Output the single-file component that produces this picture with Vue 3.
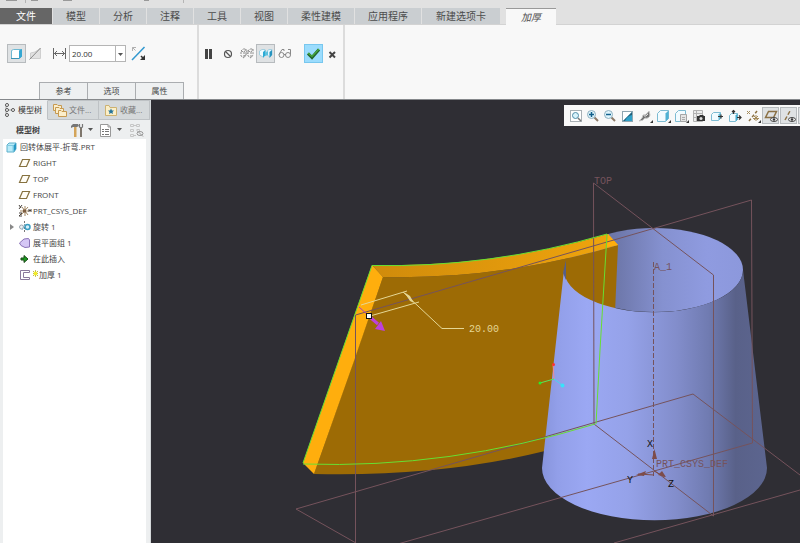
<script setup>
import { ref } from 'vue'

const thickness = ref('20.00')
const menuTabs = ['模型', '分析', '注释', '工具', '视图']
const wideTabs = ['柔性建模', '应用程序', '新建选项卡']
const panels = ['参考', '选项', '属性']

const planeArt = '<path d="M6.500 4.500H13.500L10.500 11.500H3.500Z" fill="#fffdf6" stroke="#86713f" stroke-width="1.200"/>'
const cubeArt = '<path d="M4 6L6 4H13V10L11 13H4Z" fill="#b9ebf9" stroke="#5fb0cb"/><path d="M10.500 6.500L13 4V10L10.500 13Z" fill="#2798c4"/><path d="M4.500 6.500H10V12.500" fill="none" stroke="#7fcbe2"/>'

const tree = [
  { label: '回转体展平-折弯.PRT', art: cubeArt, root: true },
  { label: 'RIGHT', art: planeArt },
  { label: 'TOP', art: planeArt },
  { label: 'FRONT', art: planeArt },
  { label: 'PRT_CSYS_DEF', art: '<path d="M9 3V13M4 8H13M5 12L12 4M6 4L12 12" stroke="#a08560" /><path d="M3 2L5 5M6 2L3 6M3 10H6L3 13H6M13 6V9M15 6V9M13 7.500H15" fill="none" stroke="#4b4540"/><rect x="7" y="6.500" width="3" height="3" fill="#7c5d40"/>' },
  { label: '旋转 1', expandable: true, art: '<circle cx="5.500" cy="8" r="2" fill="#edf1f4" stroke="#9fa9b1"/><path d="M8.500 2V14" stroke="#777" stroke-dasharray="2 1"/><circle cx="11.500" cy="8" r="2.500" fill="#d5f0fa" stroke="#3a9dc2" stroke-width="1.500"/><path d="M6 11L9 5" stroke="#90b7c8"/>' },
  { label: '展平面组 1', art: '<path d="M3.500 8L8 4L12.500 3.500L13.500 5V12L9 12.500L5 10.500Z" fill="#d5c7f5" stroke="#8a72b8"/>' },
  { label: '在此插入', art: '<path d="M5 7H8V4.500L12 8L8 11.500V9H5Z" fill="#189a1e" stroke="#1d4a1a"/>' },
  { label: '加厚 1', fresh: true, art: '<path d="M13.500 4V3.500H4.500V12.500H13.500V10.500H7.500V5.500H13.500Z" fill="#fff" stroke="#8a7a9c"/>' }
]

const lens = '<path d="M9 9L13 13" stroke="#8d7a68" stroke-width="2"/><circle cx="6.500" cy="6.500" r="4" fill="#dff4fc" stroke="#8fb0bf"/>'
const eye = '<ellipse cx="11" cy="11.500" rx="3.500" ry="2" fill="#f3f3f3" stroke="#444"/><circle cx="11" cy="11.500" r="1.200" fill="#333"/>'
const more = '<path d="M16 12V15H13Z" fill="#333"/>'
const viewTools = [
  { name: '重新调整', slim: true, art: '<rect x="2.500" y="2.500" width="11" height="11" fill="#fff" stroke="#a9b0b5"/><circle cx="7.500" cy="7.500" r="3" fill="#d8f2fb" stroke="#4f8da8"/><path d="M10 10L13 13" stroke="#777" stroke-width="1.500"/>' },
  { name: '放大', slim: true, art: lens + '<path d="M4 6.500H9M6.500 4V9" stroke="#12608c" stroke-width="1.500"/>' },
  { name: '缩小', slim: true, art: lens + '<path d="M4 6.500H9" stroke="#12608c" stroke-width="1.500"/>' },
  { name: '重画', art: '<rect x="3.500" y="3.500" width="10" height="10" fill="#fff" stroke="#8fa5b0"/><path d="M13 4V13H4Z" fill="#2fa0c8"/><path d="M4 13L13 4V7Q8 8 6 13Z" fill="#245f78"/>' },
  { name: '渲染', art: '<path d="M2 13Q6 10 6 7Q9 8 12 3L13 7Q12 11 8 10Q6 13 2 13Z" fill="#6f6f6f" stroke="#c4c4c4"/><path d="M7 8Q9 9 11 6" fill="none" stroke="#ddd"/>' + more },
  { name: '显示样式', art: '<path d="M2.500 5.500L5.500 2.500H13.500V10.500L10.500 13.500H2.500Z" fill="#f2fbff" stroke="#7dbbd2"/><path d="M10.500 5.500L13.500 2.500V10.500L10.500 13.500Z" fill="#4eb1d3"/>' + more },
  { name: '已保存方向', art: '<path d="M2.500 5.500L5.500 2.500H12.500V10L10 13.500H2.500Z" fill="#f2fbff" stroke="#7dbbd2"/><path d="M7.500 6.500H13.500V13.500H7.500Z" fill="#e4e4e4" stroke="#a5a5a5"/><path d="M9 9.500H12M9 11.500H12" stroke="#aaa"/>' + more },
  { name: '视图管理器', art: '<path d="M2.500 2.500H11.500V13.500H2.500ZM5.500 2V13M2 5.500H11M2 9.500H11" fill="#ececec" stroke="#b2b2b2"/><path d="M6 8H8L9 7H12L13 8H14V13H6Z" fill="#333"/><circle cx="10" cy="10.500" r="1.500" fill="#ddd"/>' },
  { name: '透视图', art: '<path d="M2.500 6.500L4.500 4.500H11.500V10.500L9.500 12.500H2.500Z" fill="#f2fbff" stroke="#7dbbd2"/><path d="M9.500 6.500L11.500 4.500V10.500L9.500 12.500Z" fill="#63bbd7"/><path d="M9 8.500H14M12 6.500V10.500" fill="none" stroke="#333" stroke-width="1.200"/>' },
  { name: '定向', art: '<path d="M2.500 7.500L4.500 5.500H10.500V11.500L8.500 13.500H2.500Z" fill="#f2fbff" stroke="#7dbbd2"/><path d="M8.500 7.500L10.500 5.500V11.500L8.500 13.500Z" fill="#43abd0"/><path d="M6.500 6V2M5 4L6.500 2.500L8 4M10 9.500H14M12 7.500L14 9.500L12 11.500" fill="none" stroke="#333" stroke-width="1.200"/>' },
  { name: '基准显示', art: '<path d="M4 13L12 3" stroke="#8a7042" stroke-width="1.500" stroke-dasharray="3 2"/><path d="M2 3L5 6M5 3L2 6M8 10.500H14M11 7V13M9 8L13 12M13 8L9 12" stroke="#a58c5c"/>' + more },
  { name: '平面显示', pressed: true, art: '<path d="M5.500 3.500H13.500L10.500 9.500H2.500Z" fill="none" stroke="#8b7145" stroke-width="1.500"/>' + eye },
  { name: '轴显示', pressed: true, art: '<path d="M4 12L9 3" stroke="#8b7145" stroke-width="1.500" stroke-dasharray="4 2"/>' + eye },
  { name: '点显示', pressed: true, art: '<path d="M2 3L7 8M7 3L2 8" stroke="#8b7145" stroke-width="1.500"/>' + eye }
]
</script>

<template>
  <div class="app">
    <header>
      <svg class="quick" viewBox="0 0 200 8" aria-hidden="true">
        <path d="M6 0H17V1H6ZM31 0H38V1H31ZM63 0H72V1H63ZM144 0H149V1H144Z" fill="#999" />
        <path d="M25.500 0V3M183.500 0V3" stroke="#b5b5b5" />
      </svg>
      <nav class="menu">
        <button class="tab file">文件</button>
        <button v-for="t in menuTabs" :key="t" class="tab">{{ t }}</button>
        <button v-for="t in wideTabs" :key="t" class="tab wide">{{ t }}</button>
        <button class="tab current">加厚</button>
      </nav>
    </header>

    <section class="ribbon">
      <div class="group params">
        <div class="tools">
          <button class="tool pressed" aria-label="实体">
            <svg viewBox="0 0 19 19"><path d="M4.500 6.500L6.500 5.500H14.500V12.500L12.500 14.500H4.500Z" fill="#fff" stroke="#6fb9d3" /><path d="M12 6.500L15 5V12.500L12 15Z" fill="#35a7d2" /><path d="M4 14.500H12" stroke="#3d93b5" /></svg>
          </button>
          <button class="tool" aria-label="移除材料">
            <svg viewBox="0 0 19 19"><path d="M14.500 4.500V14.500H4.500V9L9 8Z" fill="#e2e2e2" stroke="#cfcfcf" /><path d="M3.500 15.500L14.500 4" stroke="#8a8a8a" /></svg>
          </button>
          <label class="measure" for="thickness" aria-label="厚度">
            <svg viewBox="0 0 20 19"><path d="M4.500 4V15M16.500 4V15M5 9.500H16M8 7L5.500 9.500L8 12M13 7L15.500 9.500L13 12" fill="none" stroke="#666" /></svg>
          </label>
          <span class="combo">
            <input id="thickness" v-model="thickness" />
            <button aria-label="最近的值"><svg viewBox="0 0 9 14"><path d="M2 6H7L4.500 9Z" fill="#555" /></svg></button>
          </span>
          <button class="tool flip" aria-label="反向">
            <svg viewBox="0 0 19 19"><path d="M2 16L14.500 3" stroke="#3298cf" stroke-width="1.500" /><path d="M5.500 6.500L2.500 3.500M2.500 7V3.500H6" fill="none" stroke="#b0b0b0" /><path d="M11 12L14 15" stroke="#333" stroke-width="1.500" /><path d="M15 11V16H10Z" fill="#333" /></svg>
          </button>
        </div>
        <div class="panels">
          <button v-for="p in panels" :key="p">{{ p }}</button>
        </div>
      </div>
      <div class="group actions">
        <div class="tools">
          <button class="tool" aria-label="暂停"><svg viewBox="0 0 19 19"><path d="M6 5H9V15H6ZM10 5H13V15H10Z" fill="#444" /></svg></button>
          <button class="tool" aria-label="无预览"><svg viewBox="0 0 19 19"><circle cx="10" cy="10" r="3.500" fill="none" stroke="#555" stroke-width="1.200" /><path d="M7.500 7.500L12.500 12.500" stroke="#555" stroke-width="1.200" /></svg></button>
          <button class="tool" aria-label="分离预览"><svg viewBox="0 0 19 19"><path d="M4 7L6 5H9V11L7 14L4 12ZM4 7L7 8L9 5M7 8V14M11 7L13 5H16V11L14 14L11 12ZM11 7L14 8L16 5M14 8V14" fill="none" stroke="#8a8a8a" stroke-dasharray="2 1" /><path d="M9 8L12 6M7 12L11 9" stroke="#999" /></svg></button>
          <button class="tool pressed" aria-label="连接预览"><svg viewBox="0 0 19 19"><path d="M3.500 7L6 5.500H9V11L7 13L3.500 11Z" fill="#f0fbff" stroke="#a5cfdf" /><path d="M7 8L9.500 6V11L7 14Z" fill="#2caad5" /><path d="M11 7L13 5.500H16V11L14 13L11 11Z" fill="#e3f7ff" stroke="#a5cfdf" /><path d="M13.500 8L16 6V11L13.500 14Z" fill="#2593bf" /><path d="M9 9L12 7V11L9 12Z" fill="#5ac1df" /></svg></button>
          <button class="tool" aria-label="预览"><svg viewBox="0 0 19 19"><circle cx="6.500" cy="11" r="2.500" fill="none" stroke="#888" /><circle cx="13" cy="11" r="2.500" fill="none" stroke="#888" /><path d="M9 10.500H11M4 10.500L7 5.500H9V7M15.500 10.500V5.500H13" fill="none" stroke="#888" /></svg></button>
          <button class="tool accept" aria-label="确定"><svg viewBox="0 0 19 19"><path d="M4 9.500L8 13.500L15 5.500" fill="none" stroke="#24662c" stroke-width="3" /><path d="M4 9L8 12.500L15 5" fill="none" stroke="#48ac3e" stroke-width="1.200" /></svg></button>
          <button class="tool" aria-label="取消"><svg viewBox="0 0 19 19"><path d="M6.500 8L12 13.500M12 8L6.500 13.500" stroke="#444" stroke-width="2" /></svg></button>
        </div>
      </div>
    </section>

    <main>
      <aside>
        <nav class="side-tabs">
          <button class="active"><svg viewBox="0 0 16 16"><path d="M5 4V12M6 8H12" stroke="#aaa" /><g fill="#fff" stroke="#555"><circle cx="6" cy="3" r="1.500" /><circle cx="6" cy="8" r="1.500" /><circle cx="6" cy="13" r="1.500" /><circle cx="12" cy="8" r="1.500" /></g></svg>模型树</button>
          <button><svg viewBox="0 0 16 16"><g fill="#fbeecb" stroke="#c79a50"><path d="M1.500 2.500H5L6 3.500H9.500V8.500H1.500Z" /><path d="M3.500 5.500H7L8 6.500H11.500V11.500H3.500Z" /><path d="M6.500 8.500H9L10 9.500H14.500V14.500H6.500Z" /></g></svg>文件...</button>
          <button><svg viewBox="0 0 16 16"><path d="M2.500 3.500H6L7 5.500H13.500V13.500H2.500Z" fill="#fbefc8" stroke="#cdb272" /><path d="M8 6.500L9 8.500H11L9.500 10L10 12L8 11L6 12L6.500 10L5 8.500H7Z" fill="#26759b" /></svg>收藏...</button>
        </nav>
        <div class="side-head">
          <strong>模型树</strong>
          <button aria-label="设置"><svg viewBox="0 0 24 16"><path d="M1 4L3 2H8L9 4L7 5H3L1 6Z" fill="#777" /><path d="M4 5H6.500V15H4Z" fill="#d3a45a" /><path d="M9.500 2V5L11 6L12.500 5V2" fill="none" stroke="#777" stroke-width="1.200" /><path d="M10 6H12V15H10Z" fill="#7e766c" /><path d="M18 6H23L20.500 9Z" fill="#555" /></svg></button>
          <button aria-label="显示"><svg viewBox="0 0 24 16"><path d="M1.500 2.500H9L11.500 5V14.500H1.500Z" fill="#fff" stroke="#999" /><path d="M9 2.500V5H11.500" fill="none" stroke="#999" /><path d="M3 7.500H5M6 7.500H10M3 9.500H5M6 9.500H10M3 12.500H5M6 12.500H10" stroke="#777" /><path d="M18 6H23L20.500 9Z" fill="#555" /></svg></button>
          <button aria-label="层"><svg viewBox="0 0 24 16"><g fill="none" stroke="#c6c6c6"><path d="M2.500 2.500H5.500V4.500H2.500ZM2.500 7.500H5.500V9.500H2.500ZM2.500 12.500H5.500V14.500H2.500ZM8.500 2.500H11.500V4.500H8.500ZM8.500 7.500H11.500V9.500M6 3.500H8M6 13.500H8" /><ellipse cx="12" cy="11.500" rx="3" ry="2" stroke="#999" /><path d="M9 8.500L15 14.500" stroke="#999" /></g></svg></button>
        </div>
        <ul class="tree">
          <li v-for="n in tree" :key="n.label" :class="{ root: n.root }">
            <button v-if="n.expandable" class="expand" aria-label="展开"><svg viewBox="0 0 6 8"><path d="M1 1L5 4L1 7Z" fill="#888" /></svg></button>
            <svg class="node" viewBox="0 0 16 16" v-html="n.art"></svg>
            <svg v-if="n.fresh" class="spark" viewBox="0 0 6 8"><path d="M0 1L6 7M6 1L0 7M3 0V8M0 4H6" stroke="#b7af22" /><path d="M1 2H5V6H1Z" fill="#f3ed28" /></svg>
            <span>{{ n.label }}</span>
          </li>
        </ul>
      </aside>

      <section class="canvas">
        <svg class="scene" viewBox="151 100 649 443" preserveAspectRatio="xMinYMin slice" role="img" aria-label="加厚预览">
          <defs>
            <linearGradient id="outer" gradientUnits="userSpaceOnUse" x1="542" y1="0" x2="767" y2="0">
              <stop offset="0" stop-color="#8794dc" /><stop offset=".07" stop-color="#929fe9" /><stop offset=".2" stop-color="#9ba8f3" /><stop offset=".38" stop-color="#95a2e9" /><stop offset=".6" stop-color="#828dcb" /><stop offset=".74" stop-color="#707bb1" /><stop offset=".86" stop-color="#596189" /><stop offset="1" stop-color="#5c658f" />
            </linearGradient>
            <linearGradient id="inner" gradientUnits="userSpaceOnUse" x1="564" y1="0" x2="743" y2="0">
              <stop offset="0" stop-color="#5b648d" /><stop offset=".32" stop-color="#707aae" /><stop offset=".55" stop-color="#8591d0" /><stop offset=".8" stop-color="#8f9be0" /><stop offset="1" stop-color="#8c98dc" />
            </linearGradient>
            <linearGradient id="rim" gradientUnits="userSpaceOnUse" x1="372" y1="0" x2="618" y2="0">
              <stop offset="0" stop-color="#d08b0b" /><stop offset="1" stop-color="#f0a50d" />
            </linearGradient>
          </defs>
          <rect x="151" y="100" width="649" height="443" fill="#2f2e34" />
          <ellipse cx="654" cy="270" rx="89" ry="42" fill="url(#inner)" />
          <path d="M383 277Q500 280 618 245L615 312L545 451Q440 477 314 474Z" fill="#9d6b05" />
          <path d="M372 265Q490 268 608 234L618 245Q500 280 383 277Z" fill="url(#rim)" />
          <path d="M372 265L383 277L354 361L314 474L303 463Z" fill="#ffae0d" />
          <path d="M608 234L618 245L607 247Z" fill="#ffae0d" />
          <path d="M564 270A89 42 0 0 0 743 270L767 468A112 52 0 0 1 542 468Z" fill="url(#outer)" />
          <path d="M566 260L563 273L566 280Z" fill="#565e88" />

          <g fill="none" stroke="#75535c">
            <path d="M593.500 183L713.500 275V516L594 424Z" />
            <path d="M751.500 200L355.500 315V556L752.500 443Z" />
            <path d="M356 543L296 509L693 394L800 475M614 543L800 490" />
            <path d="M653.500 262V476" stroke-dasharray="5 2" />
          </g>
          <g fill="#7d4c4a">
            <path d="M654.500 449L657 459H652ZM636 475L646 471L644 476ZM666 477L662 471L658 475Z" />
          </g>
          <path d="M654 475L638 474M654 471L665 477" stroke="#7d4c4a" />

          <g fill="none" stroke="#67df32">
            <path d="M303 463L372 265.500Q490 268 607 234L600 350L596 424" />
            <path d="M303 464Q449 469 595 424" />
          </g>

          <g stroke-width="1">
            <path d="M554 379L553 364" stroke="#ed8c97" /><circle cx="553.500" cy="364.500" r="1.500" fill="#ff3030" />
            <path d="M554 379L540 383" stroke="#5be45b" /><circle cx="540" cy="383" r="1.500" fill="#28ed28" />
            <path d="M554 379L562 385" stroke="#43d9ef" /><circle cx="562.500" cy="385.500" r="2" fill="#36e4fa" />
          </g>

          <g fill="none" stroke="#e5d795">
            <path d="M361 305L407 291M370 316L419 302M403 292L442 328.500H464" />
            <path d="M404 292L410 301L414 303L410 296Z" fill="#e5d795" stroke="none" />
          </g>
          <path d="M359 307L369 316" stroke="#a83cc6" />
          <path d="M371 318L378 324" stroke="#bd41db" stroke-width="3" />
          <path d="M381 321L385 331L375 329Z" fill="#bd41db" />
          <rect x="366.500" y="313.500" width="5" height="5" fill="#fff" stroke="#111" />

          <g class="mark">
            <text x="469" y="332" fill="#e5d795">20.00</text>
            <text x="594" y="184" fill="#75535c">TOP</text>
            <text x="654" y="270" fill="#75535c">A_1</text>
            <text x="656" y="467" fill="#75535c">PRT_CSYS_DEF</text>
            <text x="647" y="447" fill="#111">X</text>
            <text x="627" y="483" fill="#111">Y</text>
            <text x="668" y="487" fill="#111">Z</text>
          </g>
        </svg>
        <div class="viewbar" role="toolbar" aria-label="视图">
          <button v-for="v in viewTools" :key="v.name" :aria-label="v.name" :class="{ slim: v.slim, pressed: v.pressed }">
            <svg viewBox="0 0 16 16" v-html="v.art"></svg>
          </button>
        </div>
      </section>
    </main>
  </div>
</template>

<style>
body { margin: 0; background: #2f2e34; }
</style>

<style scoped>
.app { display: flex; flex-direction: column; height: 100vh; overflow: hidden; font: 8px/16px "Open Sans", "Noto Sans CJK SC", sans-serif; color: #444; }
button { margin: 0; padding: 0; border: 0; background: none; font: inherit; color: inherit; flex: none; }
svg { display: block; }
header { background: #e1e1e1; flex: none; }
.quick { width: 200px; height: 8px; }
.menu { display: flex; gap: 1px; height: 17px; border-bottom: 1px solid #d3d3d3; box-sizing: border-box; }
.tab { width: 46px; height: 16px; background: #caced1; font-size: 10px; line-height: 15px; color: #4c4c4c; }
.file { width: 52px; background: #666; color: #fff; }
.wide { width: 66px; }
.wide:nth-last-child(2) { width: 78px; }
.current { width: 50px; height: 17px; margin-left: 5px; background: #f8f8f8; border-top: 1px solid #999; font-style: italic; }
.ribbon { display: flex; flex: none; height: 75px; box-sizing: border-box; background: #f8f8f8; border-bottom: 1px solid #85888b; }
.group { display: flex; flex-direction: column; justify-content: space-between; box-sizing: border-box; padding-top: 19px; border-right: 2px solid #dcdcdc; }
.params { width: 199px; }
.actions { width: 146px; }
.tools { display: flex; }
.params .tools { padding-left: 7px; }
.tool { width: 19px; height: 19px; box-sizing: border-box; }
.tool svg { width: 19px; height: 19px; }
.pressed { background: #dfe2e4; box-shadow: inset 0 0 0 1px #b7bbbe; }
.accept { margin-left: 10px; background: #9bdcfd; box-shadow: inset 0 0 0 1px #78c7ee; }
.measure { width: 20px; margin-left: 4px; }
.measure svg { width: 20px; height: 19px; }
.combo { display: flex; width: 57px; height: 17px; box-sizing: border-box; border: 1px solid #b5b5b5; background: #fff; margin-top: 1px; }
.combo input { flex: 1; min-width: 0; padding: 0 2px; border: 0; outline: 0; background: none; font: inherit; color: #333; }
.combo button { width: 10px; border-left: 1px solid #b5b5b5; }
.flip { margin-left: 4px; }
.panels { display: flex; padding-left: 39px; }
.panels button { width: 49px; height: 17px; margin-right: -1px; box-sizing: border-box; background: #eef0f1; border: 1px solid #aaadb0; border-bottom: 0; }
main { display: flex; flex: 1; min-height: 0; }
aside { display: flex; flex-direction: column; flex: none; width: 151px; box-sizing: border-box; padding: 0 4px 0 3px; background: #edeff0; border-right: 1px solid #d5d8da; }
.side-tabs { display: flex; margin: 0 -4px 0 -3px; }
.side-tabs button { display: flex; align-items: center; gap: 1px; width: 51px; height: 20px; box-sizing: border-box; padding-left: 4px; background: #d5d9db; color: #777; border: 1px solid #bec2c5; border-left: 0; white-space: nowrap; overflow: hidden; }
.side-tabs button.active { width: 48px; padding-left: 1px; background: #edeff0; color: #333; border-color: transparent #bec2c5 transparent transparent; }
.side-tabs svg { flex: none; width: 16px; height: 16px; }
.side-head { display: flex; align-items: center; height: 19px; }
.side-head strong { flex: none; width: 54px; padding-left: 13px; font-weight: 600; }
.side-head button { width: 29px; }
.side-head svg { width: 24px; height: 16px; }
.tree { flex: 1; margin: 0; padding: 0; list-style: none; background: #fff; }
.tree li { position: relative; display: flex; align-items: center; gap: 1px; height: 16px; padding-left: 13px; white-space: nowrap; }
.tree .root { padding-left: 0; }
.node { flex: none; width: 16px; height: 16px; }
.spark { width: 5px; height: 7px; margin-bottom: 4px; }
.expand { position: absolute; left: 6px; top: 4px; }
.expand svg { width: 6px; height: 8px; }
.canvas { position: relative; flex: 1; min-width: 0; background: #2f2e34; overflow: hidden; }
.scene { width: 100%; height: 100%; }
.mark { font: 10px "Liberation Mono", monospace; }
.viewbar { position: absolute; top: 5px; right: 0; display: flex; width: 236px; height: 21px; box-sizing: border-box; padding: 2px 0 2px 3px; background: #f8f8f8; overflow: hidden; }
.viewbar button { display: flex; align-items: center; justify-content: center; width: 18px; height: 17px; }
.viewbar .slim { width: 17px; }
.viewbar svg { flex: none; width: 16px; height: 16px; }
.viewbar .pressed { width: 17px; margin-right: 1px; }
</style>
